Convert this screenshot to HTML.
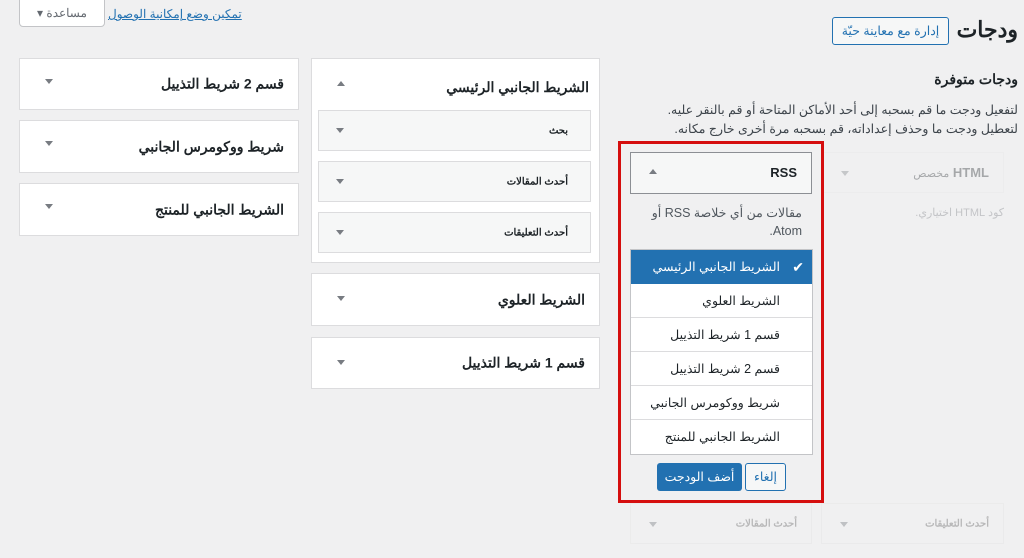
<!DOCTYPE html>
<html dir="rtl"><head><meta charset="utf-8"><style>
*{box-sizing:border-box;margin:0;padding:0}
body{width:1024px;height:558px;background:#f0f0f1;font-family:"Liberation Sans","Noto Sans CJK SC",sans-serif;color:#1d2327;position:relative;overflow:hidden;font-size:13px}
.a{position:absolute}
.box{position:absolute;background:#fff;border:1px solid #dcdcde}
.box .t{position:absolute;right:14px;top:50%;transform:translateY(-50%);font-weight:bold;font-size:14px}
.tri{position:absolute;width:0;height:0;border-left:4px solid transparent;border-right:4px solid transparent}
.dn{border-top:5px solid #787c82}
.up{border-bottom:5px solid #787c82}
.w{position:absolute;background:#f6f7f7;border:1px solid #dcdcde}
.w .t{position:absolute;right:22px;top:50%;transform:translateY(-50%);font-weight:bold;font-size:10px}
.li{position:absolute;left:0;right:0;height:34px;border-bottom:1px solid #dcdcde;font-size:12.5px;padding-right:32px;line-height:34px;background:#fff}
.f{position:absolute;right:14px;top:50%;transform:translateY(-50%);font-weight:bold;font-size:10px;color:#666}
</style></head><body>
<div class="a" style="left:19px;top:-1px;width:86px;height:28px;background:#fff;border:1px solid #c3c4c7;border-radius:0 0 4px 4px;font-size:12px;color:#646970;text-align:center;line-height:26px">مساعدة ▾</div>
<div class="a" style="left:108px;top:7px;font-size:12px;color:#2271b1;text-decoration:underline">تمكين وضع إمكانية الوصول</div>
<div class="a" style="right:6px;top:17px;font-size:22px;font-weight:bold">ودجات</div>
<div class="a" style="left:832px;top:17px;width:117px;height:28px;border:1px solid #2271b1;border-radius:3px;background:#f6f7f7;color:#2271b1;font-size:12.5px;text-align:center;line-height:26px">إدارة مع معاينة حيّة</div>
<div class="a" style="right:6px;top:71px;font-size:14px;font-weight:bold">ودجات متوفرة</div>
<div class="a" style="right:6px;top:101px;font-size:12.5px;color:#3c434a;line-height:19px;white-space:nowrap">لتفعيل ودجت ما قم بسحبه إلى أحد الأماكن المتاحة أو قم بالنقر عليه.<br>لتعطيل ودجت ما وحذف إعداداته، قم بسحبه مرة أخرى خارج مكانه.</div>
<div class="a" style="left:822px;top:152px;width:182px;height:41px;border:1px solid #e6e6e6;opacity:.35"><span class="a" style="right:14px;top:12px;font-weight:bold;font-size:13px">HTML <span style="font-weight:normal;font-size:11px">مخصص</span></span><div class="tri dn" style="left:18px;top:18px"></div></div>
<div class="a" style="right:20px;top:206px;font-size:11px;color:#c3c4c7">كود HTML اختياري.</div>
<div class="a" style="left:630px;top:503px;width:182px;height:41px;border:1px solid #e3e3e3;opacity:.4"><span class="f">أحدث المقالات</span><div class="tri dn" style="left:18px;top:18px"></div></div>
<div class="a" style="left:821px;top:503px;width:183px;height:41px;border:1px solid #e3e3e3;opacity:.4"><span class="f">أحدث التعليقات</span><div class="tri dn" style="left:18px;top:18px"></div></div>
<div class="a" style="left:618px;top:141px;width:206px;height:362px;border:3px solid #d50e0e"></div>
<div class="a" style="left:630px;top:152px;width:182px;height:42px;background:#f6f7f7;border:1px solid #8c8f94"><span class="a" style="right:14px;top:12px;font-weight:bold;font-size:13px">RSS</span><div class="tri up" style="left:18px;top:16px"></div></div>
<div class="a" style="right:222px;top:204px;font-size:12.5px;color:#50575e;line-height:18px;width:180px">مقالات من أي خلاصة RSS أو Atom.</div>
<div class="a" style="left:630px;top:249px;width:183px;height:206px;border:1px solid #c3c4c7;background:#fff">
<div class="li" style="top:0;background:#2271b1;color:#fff;border-color:#2271b1">الشريط الجانبي الرئيسي<span class="a" style="right:8px;top:0;font-size:14px">✔</span></div>
<div class="li" style="top:34px">الشريط العلوي</div>
<div class="li" style="top:68px">قسم 1 شريط التذييل</div>
<div class="li" style="top:102px">قسم 2 شريط التذييل</div>
<div class="li" style="top:136px">شريط ووكومرس الجانبي</div>
<div class="li" style="top:170px;border:0">الشريط الجانبي للمنتج</div>
</div>
<div class="a" style="left:745px;top:463px;width:41px;height:28px;border:1px solid #2271b1;border-radius:3px;background:#f6f7f7;color:#2271b1;font-size:12.5px;text-align:center;line-height:26px">إلغاء</div>
<div class="a" style="left:657px;top:463px;width:85px;height:28px;border-radius:3px;background:#2271b1;color:#fff;font-size:12.5px;text-align:center;line-height:28px">أضف الودجت</div>
<div class="box" style="left:311px;top:58px;width:289px;height:205px"><span class="a" style="right:10px;top:20px;font-weight:bold;font-size:14px">الشريط الجانبي الرئيسي</span><div class="tri up" style="left:25px;top:22px"></div></div>
<div class="w" style="left:318px;top:110px;width:273px;height:41px"><span class="t">بحث</span><div class="tri dn" style="left:17px;top:17px"></div></div>
<div class="w" style="left:318px;top:161px;width:273px;height:41px"><span class="t">أحدث المقالات</span><div class="tri dn" style="left:17px;top:17px"></div></div>
<div class="w" style="left:318px;top:212px;width:273px;height:41px"><span class="t">أحدث التعليقات</span><div class="tri dn" style="left:17px;top:17px"></div></div>
<div class="box" style="left:311px;top:273px;width:289px;height:53px"><span class="t">الشريط العلوي</span><div class="tri dn" style="left:25px;top:22px"></div></div>
<div class="box" style="left:311px;top:337px;width:289px;height:52px"><span class="t">قسم 1 شريط التذييل</span><div class="tri dn" style="left:25px;top:22px"></div></div>
<div class="box" style="left:19px;top:58px;width:280px;height:52px"><span class="t">قسم 2 شريط التذييل</span><div class="tri dn" style="left:25px;top:20px"></div></div>
<div class="box" style="left:19px;top:120px;width:280px;height:53px"><span class="t">شريط ووكومرس الجانبي</span><div class="tri dn" style="left:25px;top:20px"></div></div>
<div class="box" style="left:19px;top:183px;width:280px;height:53px"><span class="t">الشريط الجانبي للمنتج</span><div class="tri dn" style="left:25px;top:20px"></div></div>
</body></html>
